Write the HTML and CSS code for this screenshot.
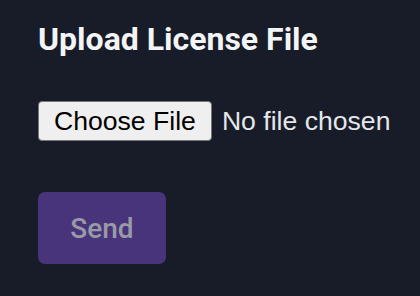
FILE: index.html
```html
<!DOCTYPE html>
<html>
<head>
<meta charset="utf-8">
<link rel="stylesheet" href="styles.css">
</head>
<body>
<div class="panel">
  <h2 class="title">Upload License File</h2>
  <input class="file" type="file">
  <button class="send" type="button" disabled>Send</button>
</div>
</body>
</html>
```
FILE: styles.css
```css
html, body {
  margin: 0;
  background: #171c28;
  height: 100%;
  overflow: hidden;
}
.panel {
  display: flex;
  flex-direction: column;
  align-items: flex-start;
  padding: 20px 38px;
  font-family: Roboto, "Liberation Sans", sans-serif;
}
.title {
  margin: 0;
  font-size: 32px;
  font-weight: 700;
  color: #f3f4f6;
  line-height: 38px;
}
.file {
  margin-top: 43px;
  font-family: "Liberation Sans", Arial, sans-serif;
  font-size: 26.6px;
  color: #e5e7eb;
  width: 370px;
}
.file::file-selector-button {
  font: inherit;
  height: 40px;
  padding: 0 15px;
  margin-right: 10px;
  border: 1px solid #767676;
  border-radius: 4px;
  background: #efefef;
  color: #000;
}
.send {
  margin-top: 51px;
  width: 128px;
  height: 72px;
  border: none;
  border-radius: 7px;
  background: #48347b;
  color: #9a9aa6;
  font-family: Roboto, "Liberation Sans", sans-serif;
  font-size: 28px;
  font-weight: 500;
}
```
